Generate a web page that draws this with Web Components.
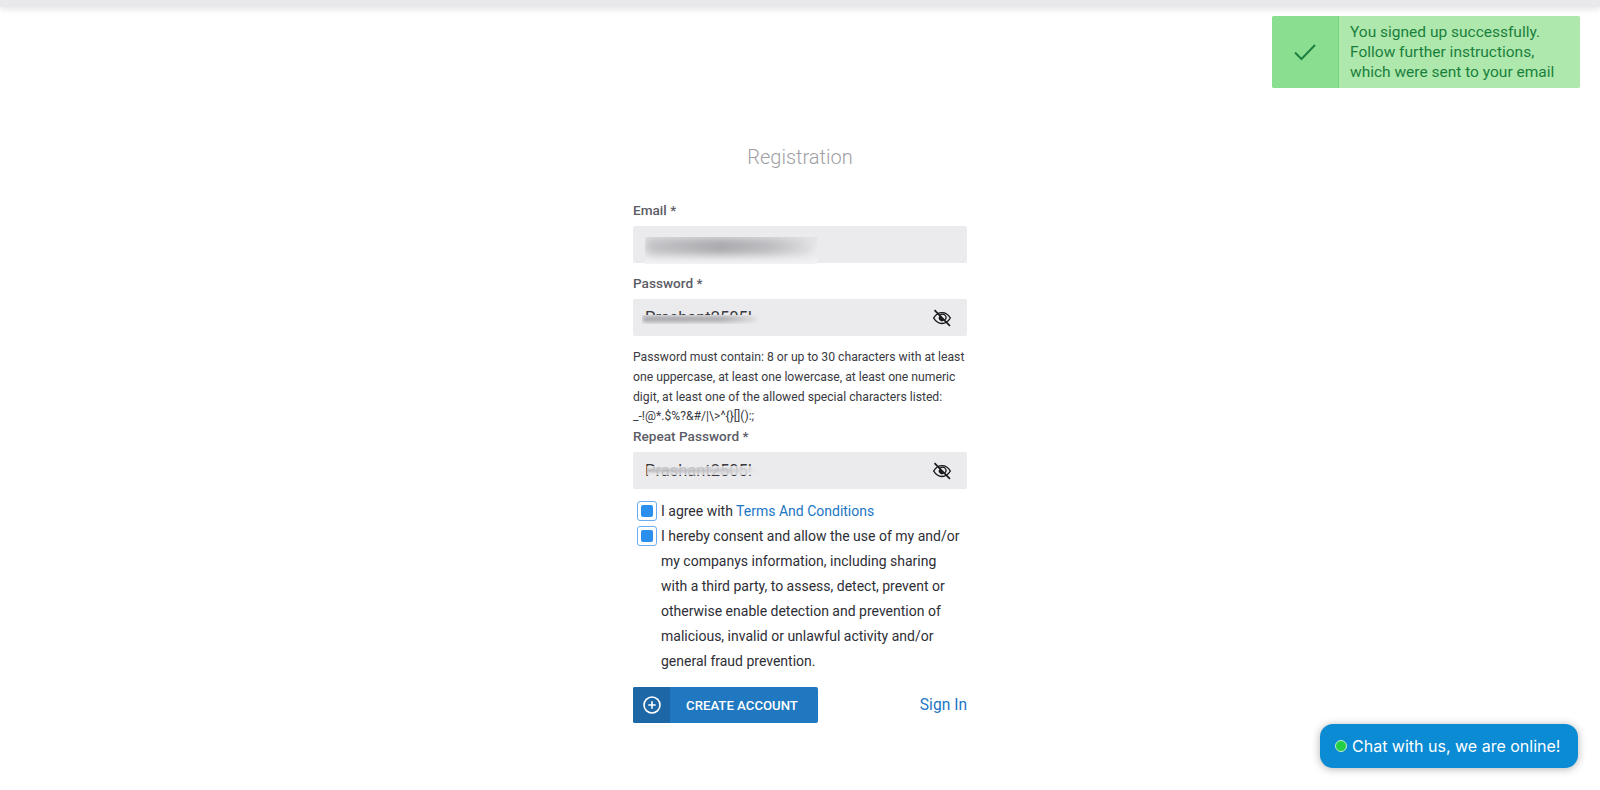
<!DOCTYPE html>
<html>
<head>
<meta charset="utf-8">
<title>Registration</title>
<style>
    html, body { margin: 0; height: 100%; background: #fff; overflow: hidden; }
    body { font-family: Roboto, "Liberation Sans", sans-serif; }
</style>
</head>
<body>
<top-bar></top-bar>
<toast-message>You signed up successfully.<br>Follow further instructions,<br>which were sent to your email</toast-message>
<register-form></register-form>
<chat-button>Chat with us, we are online!</chat-button>

<script>
const eyeIcon = `<svg width="20" height="20" viewBox="0 0 24 24" fill="none" stroke="#16161a" stroke-width="1.700">
    <path d="M2 12C4.600 7.600 8 5.500 12 5.500S19.400 7.600 22 12C19.400 16.400 16 18.500 12 18.500S4.600 16.400 2 12Z"/>
    <path d="M8.900 9.500a4 4 0 0 0 5.600 5.600Z" fill="#16161a" stroke="none"/>
    <path d="M9.700 8.500a4 4 0 0 1 5.800 5.800" stroke-width="1.500"/>
    <path d="M3 2.500L21.500 21.500" stroke-width="1.900"/>
</svg>`;

class TopBar extends HTMLElement {
    constructor() {
        super();
        this.attachShadow({ mode: "open" });
        this.shadowRoot.innerHTML = `<style>
            :host { display: block; height: 7px; background: #e9e9eb; box-shadow: 0 2px 6px rgba(0,0,0,.12); }
        </style>`;
    }
}

class ToastMessage extends HTMLElement {
    constructor() {
        super();
        this.attachShadow({ mode: "open" });
        this.shadowRoot.innerHTML = `<style>
            :host {
                position: absolute; top: 16px; left: 1272px; width: 308px; height: 72px;
                display: flex; background: #aee8ac; border-radius: 2px; color: #1a7f3c;
                font: 15.500px/20px Roboto, sans-serif;
            }
            .icon {
                width: 67px; flex: none; display: flex; align-items: center; justify-content: center;
                background: #8ade90; border-right: 1px solid #6fd77a; box-sizing: border-box; border-radius: 2px 0 0 2px;
            }
            .text { padding: 6px 0 0 11px; white-space: nowrap; }
        </style>
        <div class="icon"><svg width="22" height="18" viewBox="0 0 22 18" fill="none" stroke="#1d8042" stroke-width="2"><path d="M1 9.500L7.500 16L21 2"/></svg></div>
        <div class="text"><slot></slot></div>`;
    }
}

class FormField extends HTMLElement {
    constructor() {
        super();
        this.attachShadow({ mode: "open" });
        const eye = this.hasAttribute("eye") ? `<span class="eye">${eyeIcon}</span>` : "";
        this.shadowRoot.innerHTML = `<style>
            :host { display: block; }
            label { display: block; font-size: 13.600px; line-height: 20px; font-weight: 500; color: #5c5c66; margin-bottom: 6px; }
            .box {
                position: relative; height: 37px; background: #ebebed; border-radius: 2px;
                display: flex; align-items: center; justify-content: space-between; padding: 0 15.500px 0 12px;
                font-size: 16.500px; color: #3a3a40;
            }
            .eye { display: flex; margin-left: auto; }
        </style>
        <label>${this.getAttribute("label")}</label>
        <div class="box"><span>${this.getAttribute("value")}</span>${eye}<slot></slot></div>`;
    }
}

class BlurPatch extends HTMLElement {
    constructor() {
        super();
        this.attachShadow({ mode: "open" });
        this.shadowRoot.innerHTML = `<style>
            :host {
                position: absolute; display: block;
                left: var(--x); top: var(--y); width: var(--w); height: var(--h);
                background: var(--bg, transparent); overflow: hidden;
            }
            div { position: absolute; inset: var(--inset, 2px 6px); background: var(--smear, #b4b4b8); filter: blur(var(--blur, 4px)); border-radius: 6px; }
        </style><div></div>`;
    }
}

class CheckBox extends HTMLElement {
    constructor() {
        super();
        this.attachShadow({ mode: "open" });
        this.shadowRoot.innerHTML = `<style>
            :host { display: flex; font-size: 14px; line-height: 25px; color: #2e2e36; padding: 0 4px; }
            .mark {
                flex: none; width: 20px; height: 20px; box-sizing: border-box; margin: 2px 4px 0 0;
                border: 1px solid #6aaef0; border-radius: 3px; display: flex; align-items: center; justify-content: center;
            }
            .mark i { width: 12px; height: 12px; border-radius: 2px; background: #2b8ff0; }
        </style>
        <span class="mark"><i></i></span><span><slot></slot></span>`;
    }
}

class CreateButton extends HTMLElement {
    constructor() {
        super();
        this.attachShadow({ mode: "open" });
        this.shadowRoot.innerHTML = `<style>
            :host {
                display: flex; width: 185px; height: 36px; background: #2079c0; border-radius: 2px; color: #fff;
                font-size: 13.200px; font-weight: 500;
            }
            .icon { width: 37px; background: #1e67a6; display: flex; align-items: center; justify-content: center; border-radius: 2px 0 0 2px; }
            .label { flex: 1; display: flex; align-items: center; justify-content: center; padding-right: 4px; }
        </style>
        <span class="icon"><svg width="18" height="18" viewBox="0 0 18 18" fill="none" stroke="#fff" stroke-width="1.600"><circle cx="9" cy="9" r="8"/><path d="M9 5.300V12.700M5.300 9H12.700"/></svg></span>
        <span class="label"><slot></slot></span>`;
    }
}

class ChatButton extends HTMLElement {
    constructor() {
        super();
        this.attachShadow({ mode: "open" });
        this.shadowRoot.innerHTML = `<style>
            :host {
                position: absolute; left: 1320px; top: 724px; width: 258px; height: 44px; box-sizing: border-box;
                display: flex; align-items: center; padding-left: 15px; gap: 5px;
                background: #0a8bd4; border-radius: 13px; color: #fff; box-shadow: 0 1px 8px rgba(0,0,0,.3);
                font: 16px Inter, "Liberation Sans", sans-serif;
            }
            i { width: 10px; height: 10px; border-radius: 50%; background: #22cf45; border: 1px solid #c5ecd0; }
        </style><i></i><span><slot></slot></span>`;
    }
}

class RegisterForm extends HTMLElement {
    constructor() {
        super();
        this.attachShadow({ mode: "open" });
        this.shadowRoot.innerHTML = `<style>
            :host { display: block; width: 334px; margin: 0 auto; padding-top: 138px; position: relative; }
            h2 { margin: 0 0 31px; text-align: center; font-size: 20px; line-height: 24px; font-weight: 300; color: #a0a0a4; }
            .hint { font-size: 12.200px; line-height: 19.800px; color: #3a3a42; margin: 12px 0 -1px; }
            form-field + form-field { margin-top: 10px; }
            .checks { margin-top: 10px; }
            .row { display: flex; justify-content: space-between; align-items: center; margin-top: 13px; }
            .sign { color: #1b76c4; font-size: 15.600px; text-decoration: none; }
            a { color: #1b76c4; text-decoration: none; }
        </style>
        <h2>Registration</h2>
        <form-field label="Email *" value="">
            <blur-patch style="--x:12px;--y:11px;--w:172px;--h:27px;--bg:linear-gradient(#e4e4e6,#f3f3f5);--inset:1px 4px 9px 0;--smear:linear-gradient(90deg,#c4c4c8,#a8a8ac 45%,#bcbcc0 75%,#e0e0e2)"></blur-patch>
        </form-field>
        <form-field label="Password *" value="Prashant2505!" eye>
            <blur-patch style="--x:9px;--y:16px;--w:118px;--h:9px;--bg:#ebebed;--inset:1px 4px 2px 0;--smear:linear-gradient(90deg,#a0a0a6,#a8a8ad 70%,#dcdcde);--blur:2px"></blur-patch>
        </form-field>
        <p class="hint">Password must contain: 8 or up to 30 characters with at least one uppercase, at least one lowercase, at least one numeric digit, at least one of the allowed special characters listed: _-!@*.$%?&amp;#/|\\&gt;^{}[]():;</p>
        <form-field label="Repeat Password *" value="Prashant2505!" eye>
            <blur-patch style="--x:14px;--y:14px;--w:112px;--h:9px;--bg:rgba(235,235,237,.8);--inset:3px 4px 3px 0;--smear:linear-gradient(90deg,#b0b0b4,#bcbcc0 70%,#e4e4e6);--blur:1.500px"></blur-patch>
        </form-field>
        <div class="checks">
            <check-box>I agree with <a href="#">Terms And Conditions</a></check-box>
            <check-box>I hereby consent and allow the use of my and/or my companys information, including sharing with a third party, to assess, detect, prevent or otherwise enable detection and prevention of malicious, invalid or unlawful activity and/or general fraud prevention.</check-box>
        </div>
        <div class="row">
            <create-button>CREATE ACCOUNT</create-button>
            <a class="sign" href="#">Sign In</a>
        </div>`;
    }
}

customElements.define("top-bar", TopBar);
customElements.define("toast-message", ToastMessage);
customElements.define("form-field", FormField);
customElements.define("blur-patch", BlurPatch);
customElements.define("check-box", CheckBox);
customElements.define("create-button", CreateButton);
customElements.define("chat-button", ChatButton);
customElements.define("register-form", RegisterForm);
</script>
</body>
</html>
